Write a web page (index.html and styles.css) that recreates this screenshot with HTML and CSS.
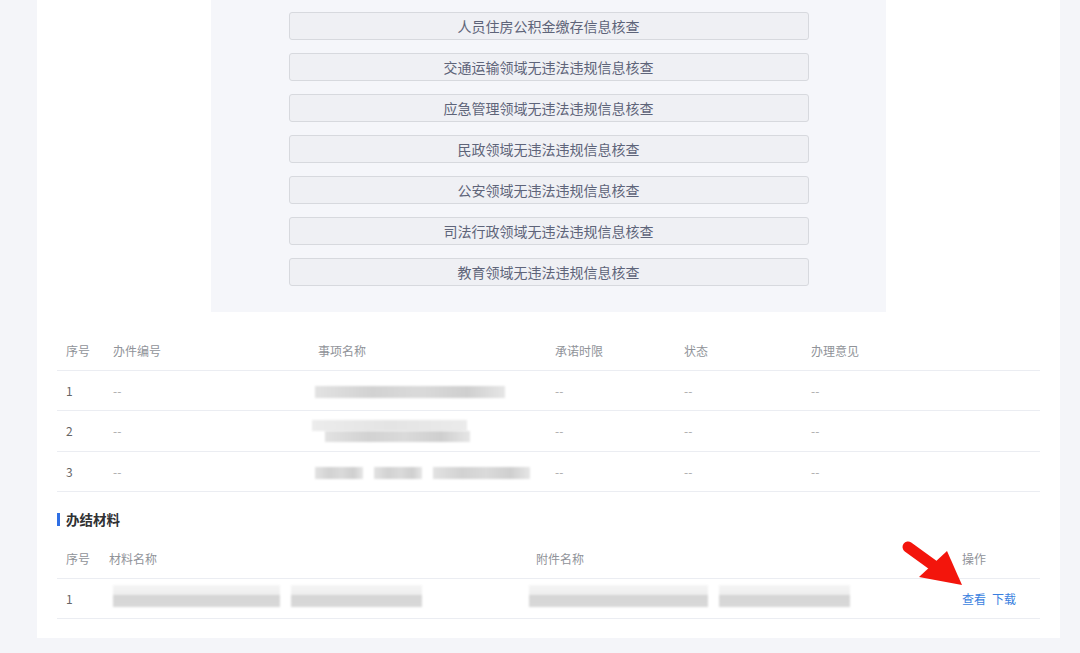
FILE: index.html
```html
<!DOCTYPE html>
<html lang="zh-CN">
<head>
  <meta charset="UTF-8">
  <title>办件详情</title>
  <link rel="stylesheet" href="styles.css">
</head>
<body>
  <div class="card">
    <!-- 核查项目 -->
    <div class="check_panel">
      <div class="check_btn">人员住房公积金缴存信息核查</div>
      <div class="check_btn">交通运输领域无违法违规信息核查</div>
      <div class="check_btn">应急管理领域无违法违规信息核查</div>
      <div class="check_btn">民政领域无违法违规信息核查</div>
      <div class="check_btn">公安领域无违法违规信息核查</div>
      <div class="check_btn">司法行政领域无违法违规信息核查</div>
      <div class="check_btn">教育领域无违法违规信息核查</div>
    </div>

    <!-- 事项列表 -->
    <table class="grid grid_items">
      <colgroup>
        <col class="c1"><col class="c2"><col class="c3"><col class="c4"><col class="c5"><col>
      </colgroup>
      <thead>
        <tr><th>序号</th><th>办件编号</th><th>事项名称</th><th>承诺时限</th><th>状态</th><th>办理意见</th></tr>
      </thead>
      <tbody>
        <tr>
          <td>1</td><td class="dash">--</td>
          <td><span class="smear s190"></span></td>
          <td class="dash">--</td><td class="dash">--</td><td class="dash">--</td>
        </tr>
        <tr>
          <td>2</td><td class="dash">--</td>
          <td><span class="smear_two"><span class="smear s150 lite"></span><span class="smear s145 shift"></span></span></td>
          <td class="dash">--</td><td class="dash">--</td><td class="dash">--</td>
        </tr>
        <tr>
          <td>3</td><td class="dash">--</td>
          <td><span class="smear s48"></span><span class="smear s48 gap"></span><span class="smear s96 gap"></span></td>
          <td class="dash">--</td><td class="dash">--</td><td class="dash">--</td>
        </tr>
      </tbody>
    </table>

    <div class="sec_title">办结材料</div>

    <!-- 办结材料 -->
    <table class="grid grid_files">
      <colgroup>
        <col class="f1"><col class="f2"><col class="f3"><col>
      </colgroup>
      <thead>
        <tr><th>序号</th><th>材料名称</th><th>附件名称</th><th>操作</th></tr>
      </thead>
      <tbody>
        <tr>
          <td>1</td>
          <td class="name_cell"><span class="smear tall s167"></span><span class="smear tall s131 gap"></span></td>
          <td class="file_cell"><span class="smear tall s179"></span><span class="smear tall s131 gap"></span></td>
          <td><a class="op">查看</a><a class="op">下载</a></td>
        </tr>
      </tbody>
    </table>

    <svg class="arrow" width="80" height="60" viewBox="0 0 80 60">
      <line x1="9" y1="8" x2="38" y2="29" stroke="#f3150c" stroke-width="11" stroke-linecap="round"/>
      <polygon points="20,38 48,12 63,46" fill="#f3150c"/>
    </svg>
  </div>
</body>
</html>
```

FILE: styles.css
```css
* {
  margin: 0;
  padding: 0;
  box-sizing: border-box;
}
body {
  background-color: #f4f5f9;
  font-family: "Noto Sans CJK SC", "Noto Sans", sans-serif;
}
.card {
  position: relative;
  width: 1023px;
  margin-left: 37px;
  padding: 0 20px 19px;
  background-color: #fff;
}
.check_panel {
  width: 675px;
  margin: 0 auto;
  padding: 12px 0 26px;
  background-color: #f5f6fa;
  display: flex;
  flex-direction: column;
  align-items: center;
  gap: 13px;
}
.check_btn {
  width: 520px;
  height: 28px;
  line-height: 26px;
  border: 1px solid #d7d9de;
  border-radius: 3px;
  background-color: #eff0f4;
  text-align: center;
  font-size: 14px;
  color: #5e6479;
}
.grid {
  width: 983px;
  border-collapse: collapse;
  table-layout: fixed;
  font-size: 12px;
}
.grid th {
  height: 38px;
  padding-left: 9px;
  text-align: left;
  font-weight: normal;
  color: #909399;
  border-bottom: 1px solid #ebedf2;
}
.grid td {
  height: 40.5px;
  padding-left: 9px;
  color: #666;
  border-bottom: 1px solid #ebedf2;
  white-space: nowrap;
}
.grid td.dash {
  color: #aaa;
}
.grid_items {
  margin-top: 20px;
}
.c1 { width: 47px; }
.c2 { width: 205px; }
.c3 { width: 237px; }
.c4 { width: 129px; }
.c5 { width: 127px; }

.f1 { width: 43px; }
.f2 { width: 427px; }
.f3 { width: 426px; }

.sec_title {
  height: 30px;
  margin-top: 12px;
  line-height: 30px;
  font-size: 13.5px;
  font-weight: bold;
  color: #303133;
  display: flex;
  align-items: center;
}
.sec_title::before {
  content: "";
  width: 3px;
  height: 13px;
  margin-right: 6px;
  background-color: #2f6fe4;
}
.grid_files {
  margin-top: 6px;
}
.grid td.name_cell {
  padding-left: 13px;
}
.grid td.file_cell {
  padding-left: 2px;
}

/* 打码的文字 */
.smear {
  display: inline-block;
  vertical-align: middle;
  height: 12px;
  background: linear-gradient(90deg, #e2e2e2, #d2d2d2 30%, #dadada 55%, #cfcfcf 80%, #e6e6e6);
  filter: blur(1px);
}
.smear.lite {
  background: linear-gradient(90deg, #ececec, #e4e4e4 50%, #ebebeb);
}
.smear.tall {
  height: 22px;
  margin-top: -8px;
  background: linear-gradient(180deg, #f5f5f5 0, #eeeeee 45%, #d5d5d5 45%, #d9d9d9 100%);
}
.smear.gap {
  margin-left: 11px;
}
.smear.shift {
  margin-left: 10px;
}
.smear_two {
  display: inline-flex;
  flex-direction: column;
  vertical-align: middle;
  margin-left: -3px;
}
.smear_two .smear {
  height: 11px;
}
.s48 { width: 48px; }
.s96 { width: 97px; }
.s131 { width: 131px; }
.s145 { width: 145px; }
.s150 { width: 155px; }
.s167 { width: 167px; }
.s179 { width: 179px; }
.s190 { width: 190px; }
.grid_items td:nth-child(3) .smear:first-child {
  margin-left: -3px;
}

.op {
  color: #3a7fe0;
  margin-right: 6px;
  cursor: pointer;
}
.arrow {
  position: absolute;
  left: 862px;
  top: 539px;
}
```
